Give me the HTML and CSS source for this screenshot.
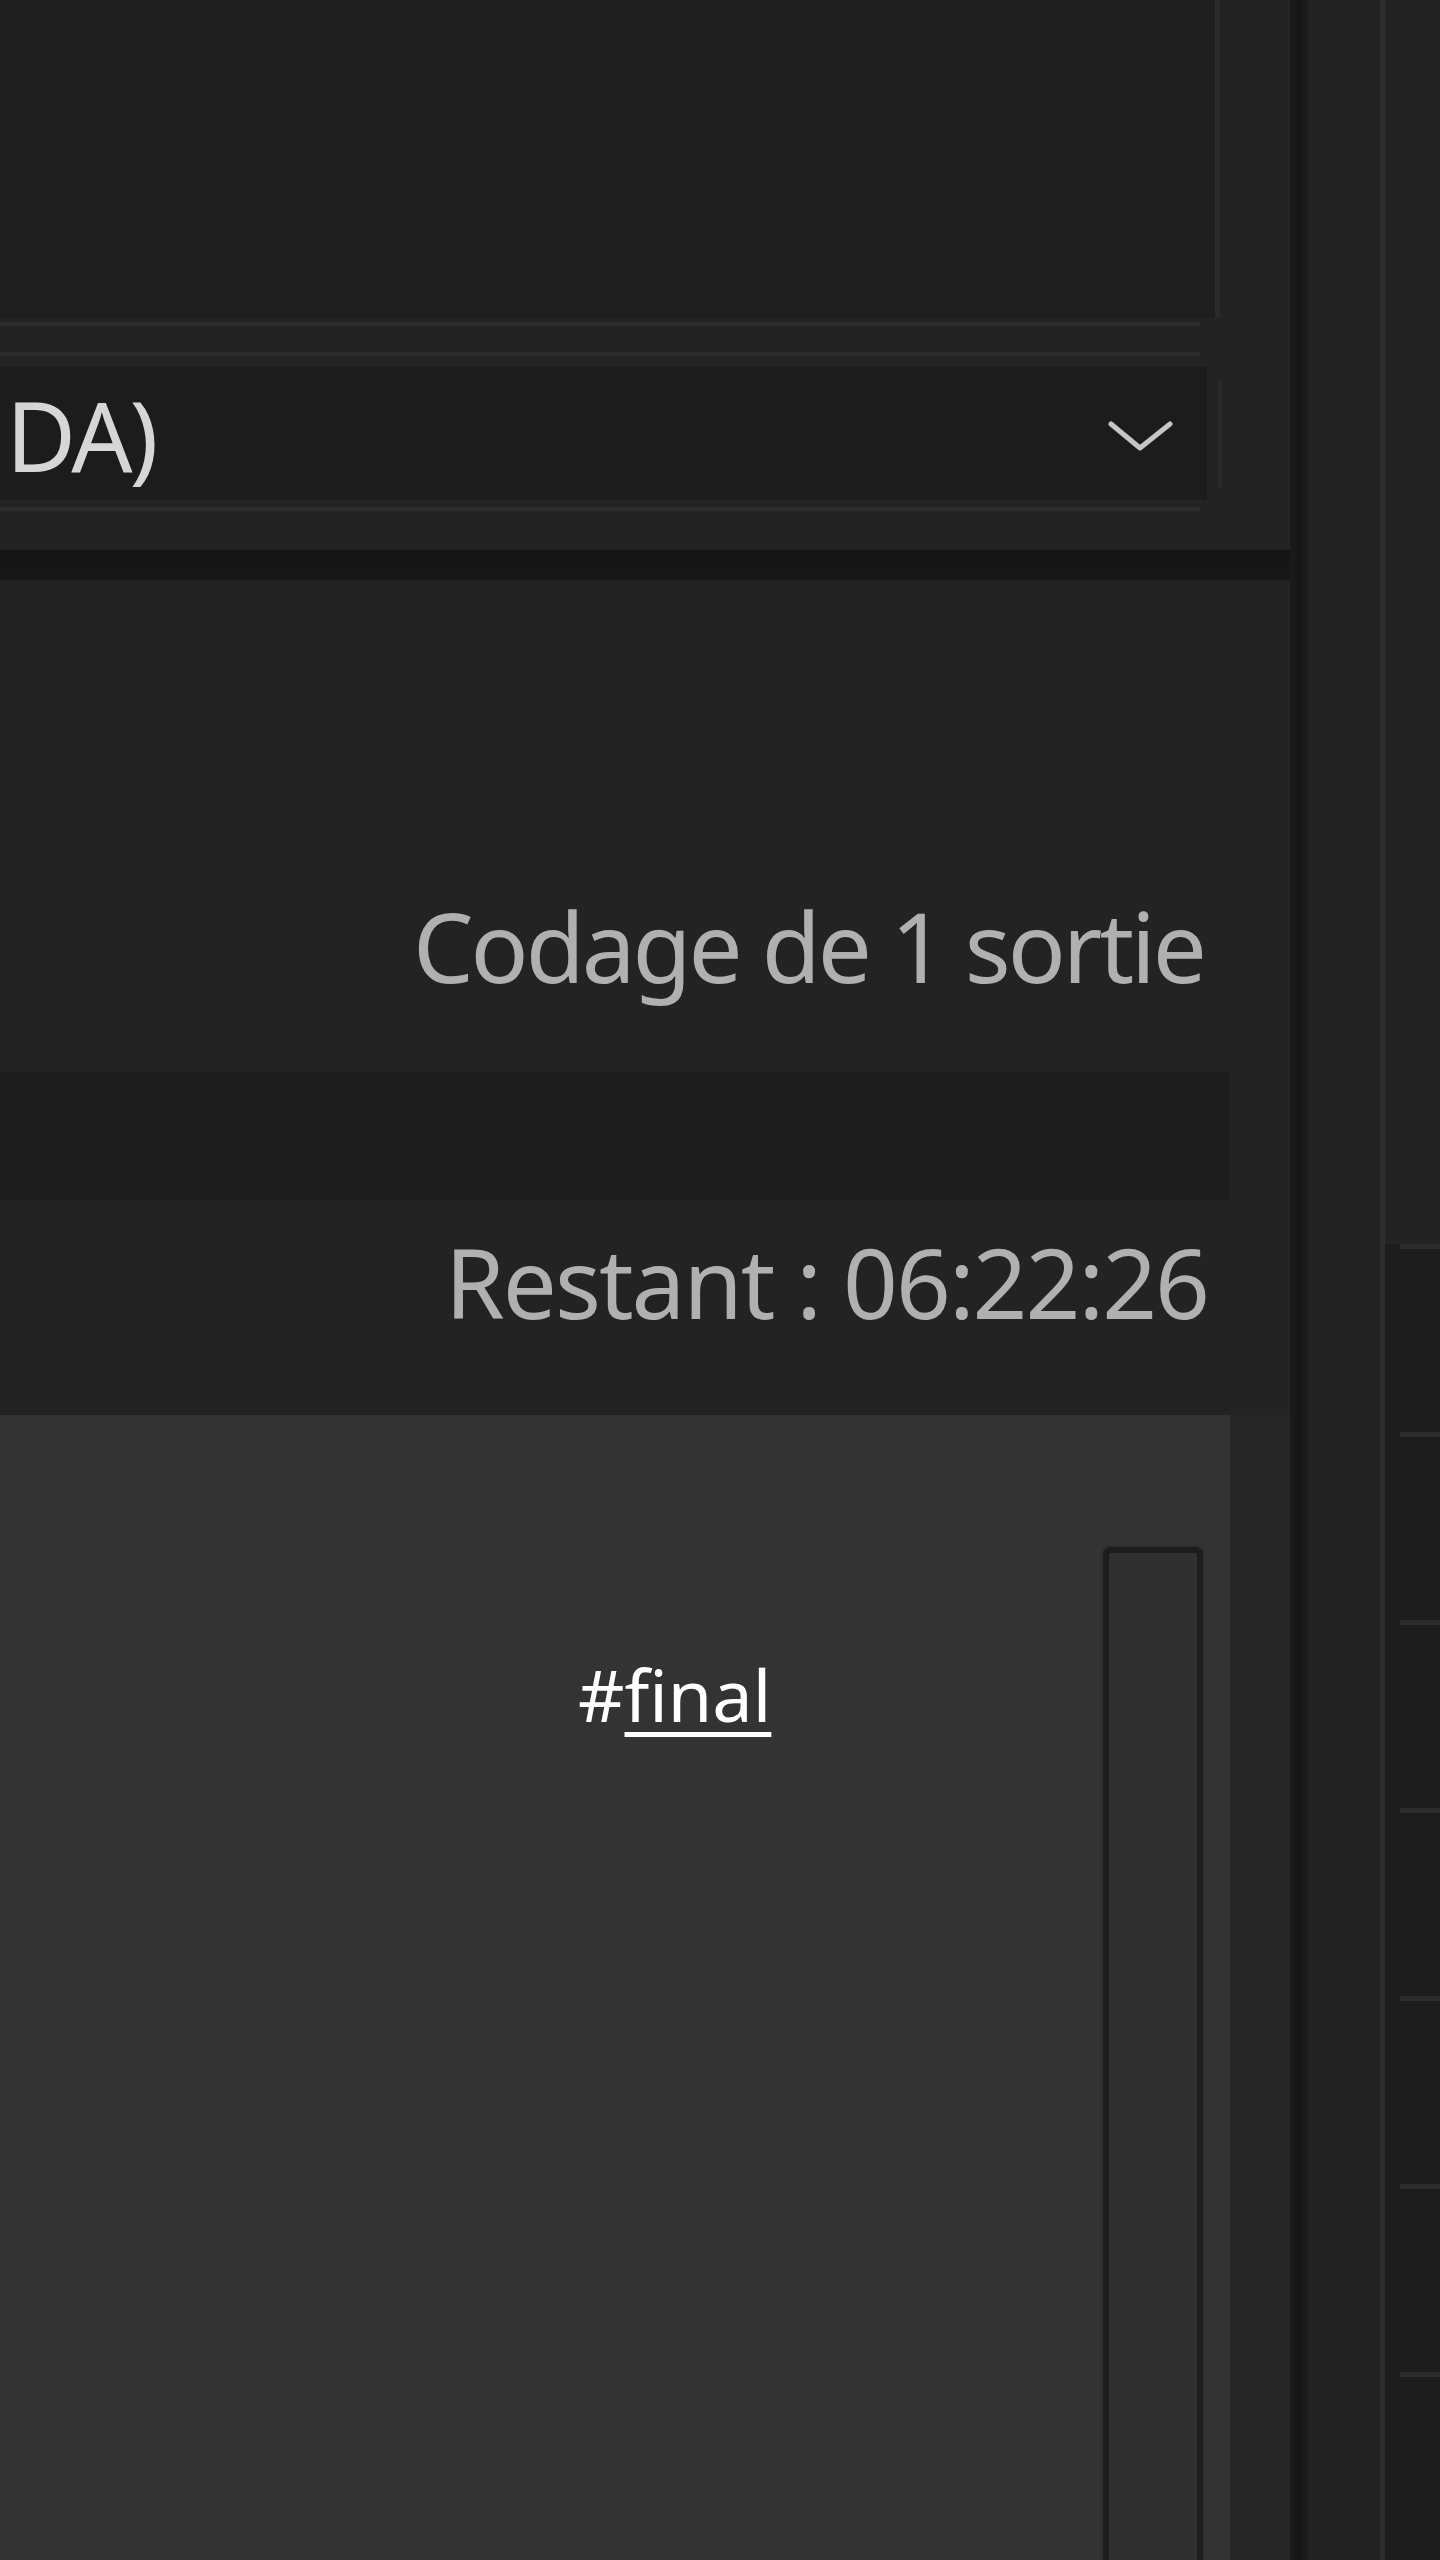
FILE: index.html
```html
<!DOCTYPE html>
<html lang="fr">
<head>
    <meta charset="UTF-8">
    <meta name="viewport" content="width=device-width, initial-scale=1.0">
    <title>File d'attente</title>
    <link rel="stylesheet" href="styles.css">
</head>
<body>
    <div class="app">
        <div class="main">
            <div class="source">
                <div class="source-view"></div>
            </div>

            <div class="settings">
                <div class="rule"></div>
                <div class="rule rule-second"></div>
                <div class="select">
                    <div class="select-box">
                        <span class="select-label">DA)</span>
                        <svg class="chevron" width="65" height="30" viewBox="0 0 65 30">
                            <polyline points="3,3 32,27 62,3" fill="none" stroke="#c6c6c6" stroke-width="5" stroke-linecap="round" stroke-linejoin="round"/>
                        </svg>
                    </div>
                    <div class="select-edge"></div>
                </div>
                <div class="rule rule-last"></div>
            </div>

            <div class="band"></div>

            <div class="status">
                <div class="status-title">Codage de 1 sortie</div>
                <div class="progress"></div>
                <div class="status-time">Restant : 06:22:26</div>
            </div>

            <div class="queue">
                <div class="queue-list">
                    <div class="queue-items">
                        <span class="tag">#<u>final</u></span>
                    </div>
                    <div class="scrollbar"></div>
                </div>
                <div class="queue-edge"></div>
            </div>
        </div>

        <div class="shadow"></div>
        <div class="side"></div>
        <div class="divider"></div>

        <div class="far">
            <div class="far-head"></div>
            <div class="far-list">
                <div class="far-row"></div>
                <div class="far-row"></div>
                <div class="far-row"></div>
                <div class="far-row"></div>
                <div class="far-row"></div>
                <div class="far-row"></div>
                <div class="far-row"></div>
            </div>
        </div>
    </div>
</body>
</html>
```

FILE: styles.css
```css
body {
    margin: 0;
    background-color: #232323;
    font-family: 'Noto Sans', 'Open Sans', sans-serif;
    overflow: hidden;
}

.app {
    display: flex;
    width: 1440px;
    height: 2560px;
}

.main {
    width: 1290px;
    display: flex;
    flex-direction: column;
    background-color: #232323;
}

/* top preview area */
.source {
    height: 318px;
    display: flex;
}
.source-view {
    width: 1215px;
    background-color: #1e1e1e;
    border-right: 5px solid #2a2a2a;
}

/* preset dropdown */
.settings {
    height: 232px;
    padding-top: 4px;
    box-sizing: border-box;
}
.rule {
    width: 1200px;
    height: 4px;
    background-color: #2c2c2c;
}
.rule-second {
    margin-top: 26px;
}
.rule-last {
    margin-top: 7px;
}
.select {
    display: flex;
    align-items: center;
    margin-top: 11px;
}
.select-box {
    width: 1207px;
    height: 133px;
    background-color: #1c1c1c;
    display: flex;
    justify-content: space-between;
    align-items: center;
    padding-right: 34px;
    box-sizing: border-box;
}
.select-label {
    align-self: flex-start;
    padding-top: 20px;
    padding-left: 6px;
    font-size: 96px;
    line-height: 96px;
    letter-spacing: -3px;
    color: #d6d6d6;
}
.chevron {
    margin-top: 4px;
}
.select-edge {
    width: 4px;
    height: 106px;
    margin-left: 11px;
    background-color: #2a2a2a;
}

.band {
    height: 30px;
    background: linear-gradient(#141414, #181818);
}

/* encoding status */
.status {
    height: 835px;
    padding-top: 318px;
    box-sizing: border-box;
    background-color: #232323;
}
.status-title,
.status-time {
    font-size: 96px;
    line-height: 96px;
    text-align: right;
    color: #b0b0b0;
}
.status-title {
    padding-right: 86px;
    letter-spacing: -3px;
}
.progress {
    width: 1230px;
    height: 128px;
    margin-top: 78px;
    background-color: #1c1c1c;
}
.status-time {
    margin-top: 34px;
    padding-right: 82px;
    letter-spacing: -2px;
}

/* output queue */
.queue {
    flex: 1;
    display: flex;
}
.queue-list {
    width: 1230px;
    display: flex;
    background-color: #333333;
}
.queue-items {
    flex: 1;
    padding-top: 243px;
    padding-left: 578px;
}
.tag {
    font-size: 72px;
    line-height: 72px;
    color: #ffffff;
}
.tag u {
    text-decoration-thickness: 5px;
    text-underline-offset: 10px;
}
.scrollbar {
    width: 88px;
    margin-top: 132px;
    margin-right: 27px;
    background-color: #303030;
    border: 6px solid #1d1d1d;
    border-bottom: none;
    border-radius: 8px 8px 0 0;
    box-shadow: 0 0 3px rgba(0, 0, 0, 0.4);
}
.queue-edge {
    flex: 1;
    background-color: #262626;
}

/* right side panels */
.shadow {
    width: 18px;
    background: linear-gradient(to right, #1b1b1b, #161616 50%, #1d1d1d);
}
.side {
    width: 72px;
    background-color: #232323;
}
.divider {
    width: 5px;
    background-color: #2e2e2e;
}
.far {
    flex: 1;
    display: flex;
    flex-direction: column;
}
.far-head {
    height: 1276px;
    background-color: #232323;
}
.far-list {
    flex: 1;
    background-color: #1d1d1d;
}
.far-row {
    height: 183px;
    margin-left: 15px;
    border-top: 5px solid #2c2c2c;
}
```
